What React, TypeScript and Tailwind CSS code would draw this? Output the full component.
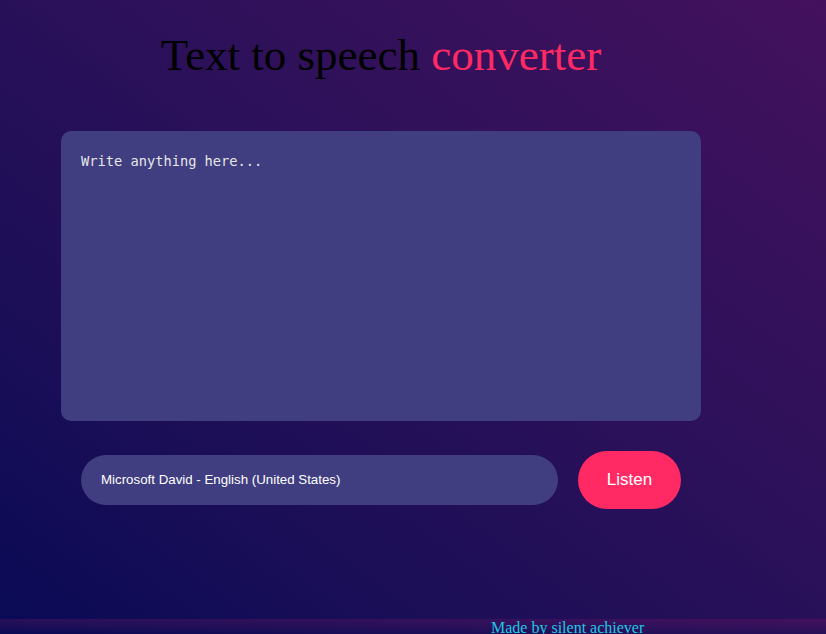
export default function App() {
  return (
    <div className="h-[634px] overflow-hidden">
      <div className="h-[619px] bg-linear-to-tr from-[#0a0a55] to-[#43105d] pl-[61px]">
        <div className="flex w-[640px] flex-col">
          <h1 className="pt-[30px] text-center font-['Liberation_Serif',serif] text-[45px] leading-[50px] text-black">
            Text to speech <span className="text-[#ff2a64]">converter</span>
          </h1>
          <textarea
            className="mt-[51px] h-[290px] w-[640px] resize-none rounded-[10px] bg-[#403e80] p-5 font-['DejaVu_Sans_Mono',monospace] text-[13.7px] text-[#e6e6e6] outline-none placeholder:text-[#e6e6e6]"
            placeholder="Write anything here..."
          />
          <div className="mt-[30px] flex items-center gap-5 px-5">
            <div className="flex h-[50px] flex-1 items-center rounded-full bg-[#403e80] px-5 font-['Liberation_Sans',sans-serif] text-[13.3px] text-white">
              Microsoft David - English (United States)
            </div>
            <button className="h-[58px] w-[103px] rounded-full bg-[#ff2a64] font-['Liberation_Sans',sans-serif] text-[17px] text-white">
              Listen
            </button>
          </div>
        </div>
      </div>
      <div className="h-[15px] overflow-hidden bg-linear-to-tr from-[#0a0a55] to-[#43105d] pl-[491px]">
        <p className="font-['Liberation_Serif',serif] text-[16px] leading-[18px] text-[#1ec8e6]">
          Made by silent achiever
        </p>
      </div>
    </div>
  )
}
